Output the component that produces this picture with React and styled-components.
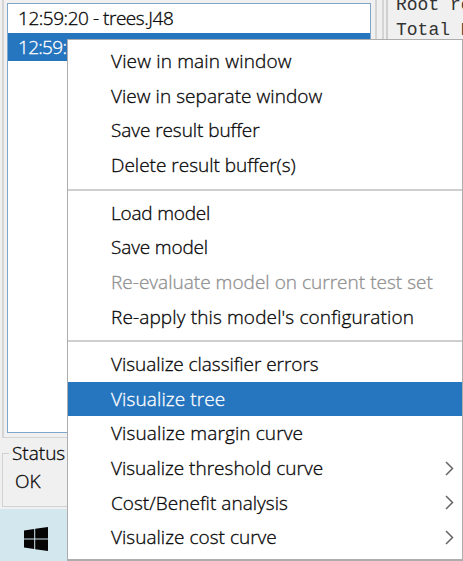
import React from "react";
import styled, { createGlobalStyle } from "styled-components";

const GlobalStyle = createGlobalStyle`
  * { box-sizing: border-box; }
  body {
    margin: 0;
    overflow: hidden;
    font-family: "Open Sans", "Noto Sans", sans-serif;
    font-size: 19px;
    font-weight: 300;
    -webkit-text-stroke: 0.3px currentColor;
    font-variant-ligatures: none;
    color: #050505;
  }
`;

const Desktop = styled.div`
  position: relative;
  display: flex;
  flex-direction: column;
  width: 463px;
  height: 561px;
  overflow: hidden;
  background: #f0f0f0;
`;

const Workspace = styled.div`
  display: flex;
  height: 438px;
  flex: none;
  padding-left: 2px;
`;

const ResultPanel = styled.div`
  width: 375px;
  flex: none;
  padding: 3px 4px 4px 3px;
  border: solid #d4d4d4;
  border-width: 0 2px 1px 2px;
`;

const ResultList = styled.div`
  height: 100%;
  border: 1px solid #7fa5c9;
  background: #fff;
`;

const ResultRow = styled.div`
  display: flex;
  align-items: center;
  height: ${(p) => (p.$selected ? 28 : 29)}px;
  padding-left: 10px;
  color: ${(p) => (p.$selected ? "#fff" : "#050505")};
  background: ${(p) => (p.$selected ? "#2675bf" : "#fff")};
  letter-spacing: ${(p) => (p.$selected ? -0.7 : -0.46)}px;
  line-height: 26px;
  padding-bottom: 1px;
  white-space: nowrap;
`;

const Splitter = styled.div`
  width: 7px;
  flex: none;
  border-right: 2px solid #d4d4d4;
`;

const OutputPanel = styled.div`
  flex: 1;
  min-width: 0;
  margin-left: 2px;
  padding-left: 8px;
  border: solid #cfcfcf;
  border-width: 0 0 1px 2px;
  overflow: hidden;
`;

const OutputText = styled.pre`
  margin: -7px 0 0;
  font-family: "Liberation Mono", monospace;
  font-size: 18px;
  font-weight: 400;
  -webkit-text-stroke: 0;
  line-height: 25px;
  color: #333;
`;

const StatusBar = styled.fieldset`
  height: 66px;
  flex: none;
  min-width: 0;
  margin: 3px 2px 0;
  padding: 0 0 0 12px;
  border: 1px solid #d2d2d2;
`;

const StatusTitle = styled.legend`
  margin-left: -6px;
  padding: 0 2px 0 3px;
  line-height: 24px;
  letter-spacing: 0;
`;

const StatusText = styled.div`
  line-height: 33px;
  letter-spacing: 0;
`;

const Taskbar = styled.div`
  display: flex;
  flex: 1;
  align-items: center;
  margin-top: 2px;
  padding: 7px 0 0 24px;
  background: #d3e7ef;
`;

const ContextMenu = styled.div`
  position: absolute;
  top: 39px;
  left: 67px;
  width: 396px;
  height: 522px;
  padding-top: 4px;
  border: solid #adadad;
  border-width: 1px 1px 2px 1px;
  background: #fff;
`;

const MenuItem = styled.div`
  display: flex;
  align-items: center;
  justify-content: space-between;
  height: 34.6px;
  padding: 0 8px 0 43px;
  color: ${(p) => (p.$active ? "#fff" : p.$disabled ? "#909090" : "#050505")};
  background: ${(p) => (p.$active ? "#2675bf" : "transparent")};
  letter-spacing: ${(p) => p.$tracking}px;
  white-space: nowrap;
`;

const Separator = styled.div`
  height: 2px;
  margin: 6.3px 0 4.8px;
  background: #cfcfcf;
`;

const sections = [
  [
    { label: "View in main window", tracking: 0.17 },
    { label: "View in separate window", tracking: 0.05 },
    { label: "Save result buffer", tracking: -0.07 },
    { label: "Delete result buffer(s)", tracking: 0 },
  ],
  [
    { label: "Load model", tracking: -0.2 },
    { label: "Save model", tracking: -0.15 },
    { label: "Re-evaluate model on current test set", tracking: 0.02, disabled: true },
    { label: "Re-apply this model's configuration", tracking: 0.13 },
  ],
  [
    { label: "Visualize classifier errors", tracking: -0.05 },
    { label: "Visualize tree", tracking: 0.12, active: true },
    { label: "Visualize margin curve", tracking: 0.12 },
    { label: "Visualize threshold curve", tracking: 0, submenu: true },
    { label: "Cost/Benefit analysis", tracking: 0.03, submenu: true },
    { label: "Visualize cost curve", tracking: 0.03, submenu: true },
  ],
];

function SubmenuArrow() {
  return (
    <svg width="9" height="15" viewBox="0 0 9 15" fill="none" stroke="#666" strokeWidth="1.5">
      <path d="M1 1l6.5 6.5L1 14" />
    </svg>
  );
}

function WindowsLogo() {
  return (
    <svg width="24" height="24" viewBox="0 0 24 24" fill="#050505">
      <path d="M0 3.4L10.2 2v9.5H0zM11.2 1.8L24 0v11.5H11.2zM0 12.5h10.2V22L0 20.6zM11.2 12.5H24V24l-12.8-1.8z" />
    </svg>
  );
}

export default function App() {
  return (
    <Desktop>
      <GlobalStyle />
      <Workspace>
        <ResultPanel>
          <ResultList>
            <ResultRow>12:59:20 - trees.J48</ResultRow>
            <ResultRow $selected>12:59:</ResultRow>
          </ResultList>
        </ResultPanel>
        <Splitter />
        <OutputPanel>
          <OutputText>{"Root re\nTotal N"}</OutputText>
        </OutputPanel>
      </Workspace>
      <StatusBar>
        <StatusTitle>Status</StatusTitle>
        <StatusText>OK</StatusText>
      </StatusBar>
      <Taskbar>
        <WindowsLogo />
      </Taskbar>
      <ContextMenu>
        {sections.map((items, i) => (
          <React.Fragment key={i}>
            {i > 0 && <Separator />}
            {items.map((item) => (
              <MenuItem
                key={item.label}
                $tracking={item.tracking}
                $active={item.active}
                $disabled={item.disabled}
              >
                {item.label}
                {item.submenu && <SubmenuArrow />}
              </MenuItem>
            ))}
          </React.Fragment>
        ))}
      </ContextMenu>
    </Desktop>
  );
}
